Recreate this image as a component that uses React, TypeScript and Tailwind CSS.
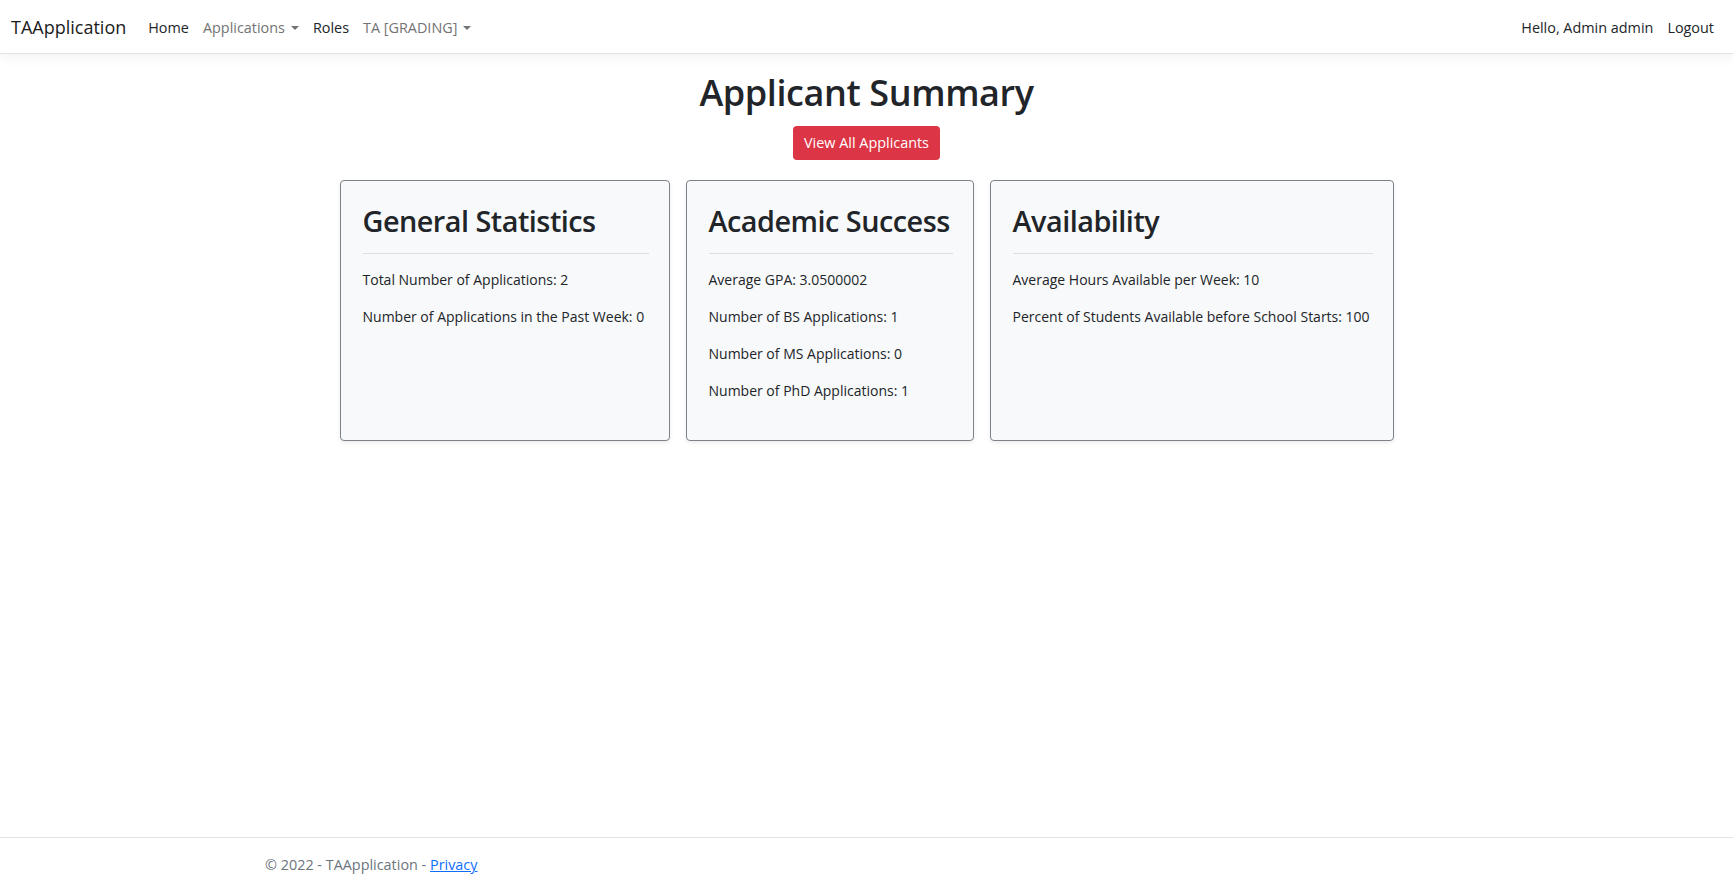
import React from "react";

function Caret() {
  return (
    <span className="inline-block ml-[6px] align-[3px] border-t-[4px] border-x-[4px] border-b-0 border-x-transparent border-t-current" />
  );
}

function Card({ title, width, lines }: { title: string; width: string; lines: string[] }) {
  return (
    <div
      className={`${width} bg-[#f8f9fa] border border-[#7d8288] rounded-[4px] shadow-[0_2px_4px_rgba(0,0,0,0.075)] pl-[22px] pr-[20px] pt-[22px] pb-[24px]`}
    >
      <h2 className="text-[28.8px] leading-[35px] font-semibold tracking-[-0.5px] text-[#212529] whitespace-nowrap">{title}</h2>
      <div className="mt-[15px] mb-[14px] h-px bg-[#dcdee0]" />
      <div className="flex flex-col">
        {lines.map((l) => (
          <p key={l} className="text-[14px] leading-[23px] mb-[14px] text-[#212529] whitespace-nowrap">
            {l}
          </p>
        ))}
      </div>
    </div>
  );
}

export default function App() {
  return (
    <div className="min-h-screen flex flex-col bg-white font-['Open_Sans','Noto_Sans',sans-serif] text-[#212529]">
      <nav className="h-[54px] shrink-0 border-b border-[#e3e3e3] shadow-[0_4px_12px_rgba(0,0,0,0.05)] flex items-center justify-between pl-[11px] pr-[12px]">
        <div className="flex items-center pt-[2px]">
          <span className="text-[18px] text-[#1a1a1a] mr-[15px]">TAApplication</span>
          <div className="flex items-center text-[14.4px]">
            <span className="px-[7px] text-[#212529]">Home</span>
            <span className="px-[7px] text-[#737373]">
              Applications
              <Caret />
            </span>
            <span className="px-[7px] text-[#212529]">Roles</span>
            <span className="px-[7px] text-[#737373]">
              TA [GRADING]
              <Caret />
            </span>
          </div>
        </div>
        <div className="flex items-center text-[14.4px] text-[#212529] pt-[2px]">
          <span className="px-[7px]">Hello, Admin admin</span>
          <span className="px-[7px]">Logout</span>
        </div>
      </nav>

      <main className="flex-1 flex flex-col items-center pt-[17px]">
        <h1 className="text-[36px] leading-[43px] font-semibold tracking-[-0.4px] text-[#212529]">Applicant Summary</h1>
        <button className="mt-[12px] h-[34px] px-[11px] rounded-[4px] bg-[#dc3545] text-white text-[14.4px] leading-[20px]">
          View All Applicants
        </button>
        <div className="mt-[20px] flex items-stretch gap-[16px]">
          <Card
            title="General Statistics"
            width="w-[330px]"
            lines={["Total Number of Applications: 2", "Number of Applications in the Past Week: 0"]}
          />
          <Card
            title="Academic Success"
            width="w-[288px]"
            lines={[
              "Average GPA: 3.0500002",
              "Number of BS Applications: 1",
              "Number of MS Applications: 0",
              "Number of PhD Applications: 1",
            ]}
          />
          <Card
            title="Availability"
            width="w-[404px]"
            lines={["Average Hours Available per Week: 10", "Percent of Students Available before School Starts: 100"]}
          />
        </div>
      </main>

      <footer className="h-[55px] shrink-0 border-t border-[#e3e3e3] flex items-center pl-[265px] text-[14.4px] text-[#6c757d]">
        <span>
          © 2022 - TAApplication - <span className="text-[#0d6efd] underline">Privacy</span>
        </span>
      </footer>
    </div>
  );
}
